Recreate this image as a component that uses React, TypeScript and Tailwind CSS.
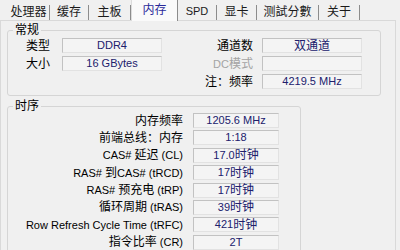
import React from "react";

const tabs = [
  { label: "处理器", w: "w-[42px]" },
  { label: "缓存", w: "w-[39px]" },
  { label: "主板", w: "w-[42px]" },
  { label: "内存", w: "w-[47px]", active: true },
  { label: "SPD", w: "w-[39px]" },
  { label: "显卡", w: "w-[40px]" },
  { label: "测試分數", w: "w-[62px]" },
  { label: "关于", w: "w-[41px]" },
];

const timings = [
  ["内存频率", "1205.6 MHz"],
  ["前端总线：内存", "1:18"],
  ["CAS# 延迟 (CL)", "17.0 时钟"],
  ["RAS# 到CAS# (tRCD)", "17 时钟"],
  ["RAS# 预充电 (tRP)", "17 时钟"],
  ["循环周期 (tRAS)", "39 时钟"],
  ["Row Refresh Cycle Time (tRFC)", "421 时钟"],
  ["指令比率 (CR)", "2T"],
];

// latin runs a bit smaller than the CJK glyphs, like the original UI font
function Mixed({ text }: { text: string }) {
  const parts = text.match(/[\x00-\x7f]+|[^\x00-\x7f]+/g) ?? [];
  return (
    <>
      {parts.map((p, i) =>
        /^[\x00-\x7f]/.test(p) ? (
          <span key={i} className="text-[11px]">
            {p}
          </span>
        ) : (
          <span key={i}>{p}</span>
        )
      )}
    </>
  );
}

function Field({ value, w }: { value?: string; w: string }) {
  return (
    <div
      className={`${w} h-[15px] flex items-center justify-center bg-[#f4f4f4] border border-[#c2c2c2] border-b-[#e2e2e2] border-r-[#e2e2e2] text-[#20206c] leading-none whitespace-nowrap`}
    >
      {value ? <Mixed text={value} /> : null}
    </div>
  );
}

export default function App() {
  return (
    <div className="w-[400px] h-[250px] overflow-hidden bg-[#f0f0f0] text-[12px] text-black font-['Liberation_Sans','Noto_Sans_CJK_SC',sans-serif]">
      {/* tab strip */}
      <div className="flex h-[20px] pl-[8px]">
        {tabs.map((t) =>
          t.active ? (
            <div
              key={t.label}
              className={`${t.w} relative z-10 h-[21px] flex items-center justify-center pb-[1px] bg-[#fafafa] border-l border-l-[#dcdcdc] border-r border-r-[#8c8c8c] text-[#2a2a9a]`}
            >
              <Mixed text={t.label} />
            </div>
          ) : (
            <div
              key={t.label}
              className={`${t.w} mt-[5px] h-[15px] flex items-center justify-center pb-[2px] border-r border-r-[#8c8c8c] text-[#1a1a1a] leading-none`}
            >
              <Mixed text={t.label} />
            </div>
          )
        )}
      </div>

      {/* page */}
      <div className="w-[396px] h-[230px] border-t border-l border-r border-[#d9d9d9] pt-[2px]">
        <fieldset className="ml-[6px] w-[374px] border border-[#d5d5d5] rounded-[3px] pb-[6px]">
          <legend className="ml-[5px] px-[2px] leading-[14px]">常规</legend>
          <div className="mt-[1px] flex flex-col gap-[3px]">
            <div className="flex items-center">
              <div className="w-[42px] text-right leading-none">类型</div>
              <div className="w-[12px]" />
              <Field value="DDR4" w="w-[100px]" />
              <div className="w-[91px] text-right leading-none">通道数</div>
              <div className="w-[9px]" />
              <Field value="双通道" w="w-[100px]" />
            </div>
            <div className="flex items-center">
              <div className="w-[42px] text-right leading-none">大小</div>
              <div className="w-[12px]" />
              <Field value="16 GBytes" w="w-[100px]" />
              <div className="w-[91px] text-right leading-none text-[#a3a3a3]">
                <Mixed text="DC模式" />
              </div>
              <div className="w-[9px]" />
              <Field w="w-[100px]" />
            </div>
            <div className="flex items-center">
              <div className="w-[42px]" />
              <div className="w-[12px]" />
              <div className="w-[100px] h-[15px]" />
              <div className="w-[91px] text-right leading-none">注：频率</div>
              <div className="w-[9px]" />
              <Field value="4219.5 MHz" w="w-[100px]" />
            </div>
          </div>
        </fieldset>

        <fieldset className="ml-[6px] mt-[3px] w-[294px] h-[200px] border border-[#d5d5d5] rounded-[3px]">
          <legend className="ml-[5px] px-[2px] leading-[14px]">时序</legend>
          <div className="flex flex-col gap-[2.4px]">
            {timings.map(([label, value]) => (
              <div key={label} className="flex items-center">
                <div className="w-[175px] text-right leading-none whitespace-nowrap">
                  <Mixed text={label} />
                </div>
                <div className="w-[10px]" />
                <Field value={value} w="w-[86px]" />
              </div>
            ))}
          </div>
        </fieldset>
      </div>
    </div>
  );
}
